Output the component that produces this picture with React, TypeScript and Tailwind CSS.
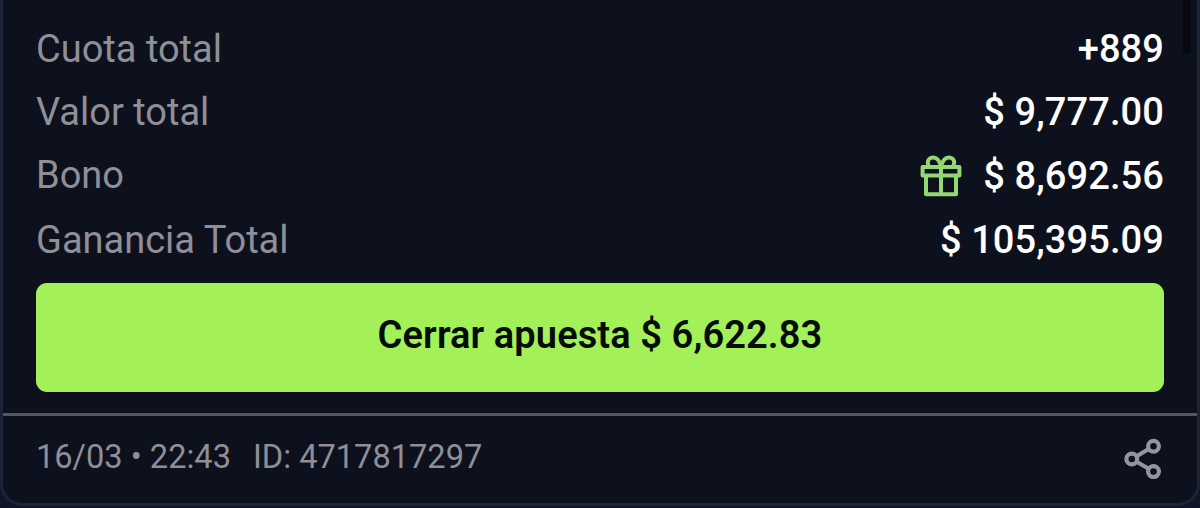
function GiftIcon() {
  return (
    <svg width="42" height="42" viewBox="0 0 42 42" fill="none" stroke="#93d873" strokeWidth="4" strokeLinejoin="round" className="-mt-px shrink-0">
      <rect x="2.6" y="12" width="36.8" height="8.6" />
      <path d="M6 20.8V39.2H36V20.8M21 12V39.2" />
      <path d="M21 11.6C19.6 6 16.8 2.6 13.2 2.6C10 2.6 7.8 4.8 7.8 7.6C7.8 9.4 8.4 10.8 9.4 11.8M21 11.6C22.4 6 25.2 2.6 28.8 2.6C32 2.6 34.2 4.8 34.2 7.6C34.2 9.4 33.6 10.8 32.6 11.8" />
    </svg>
  );
}

function ShareIcon() {
  return (
    <svg width="38" height="42" viewBox="0 0 38 42" fill="none" stroke="#95959d" strokeWidth="4.2" className="shrink-0">
      <circle cx="7.8" cy="21" r="5.4" />
      <circle cx="29.5" cy="8.2" r="5.4" />
      <circle cx="29.5" cy="33.6" r="5.4" />
      <path d="M12.6 18.2L24.7 11M12.6 23.8L24.7 30.8" />
    </svg>
  );
}

export default function App() {
  return (
    <main className="relative h-[508px] w-[1200px] overflow-hidden bg-[#0e1429] font-['Roboto',sans-serif]">
      <section className="flex h-[506px] flex-col rounded-b-[22px] border-x-[3px] border-b-[3px] border-[#1b2337] bg-[#0d111d]">
        <dl className="flex flex-col pl-[33px] pr-[33px] pt-[18px] text-[38px] leading-[63px]">
          <div className="flex h-[63px] justify-between">
            <dt className="text-[#8f8f97]">Cuota total</dt>
            <dd className="font-medium tracking-[0.1px] text-white">+889</dd>
          </div>
          <div className="flex h-[63px] justify-between">
            <dt className="text-[#8f8f97]">Valor total</dt>
            <dd className="font-medium tracking-[0.1px] text-white">$ 9,777.00</dd>
          </div>
          <div className="flex h-[65px] items-end justify-between">
            <dt className="pb-[2px] text-[#8f8f97]">Bono</dt>
            <dd className="flex items-center gap-[21px] pb-px font-medium tracking-[0.1px] text-white">
              <GiftIcon />
              <span>$ 8,692.56</span>
            </dd>
          </div>
          <div className="flex h-[63px] justify-between">
            <dt className="text-[#8f8f97]">Ganancia Total</dt>
            <dd className="font-medium tracking-[0.1px] text-white">$ 105,395.09</dd>
          </div>
        </dl>
        <button className="mx-[32.6px] mt-[10.6px] h-[109px] shrink-0 rounded-[11px] bg-[#a3f059] pb-[3px] text-[38px] font-semibold tracking-[0.1px] text-[#050c03]">
          Cerrar apuesta $ 6,622.83
        </button>
        <footer className="mt-[21.4px] flex flex-1 items-center justify-between border-t-[3px] border-[#55575f] pl-[33px] pr-[35px] text-[32.6px] text-[#8f8f97]">
          <p className="flex gap-[22px] pb-[5px]">
            <span>16/03 • 22:43</span>
            <span>ID: 4717817297</span>
          </p>
          <ShareIcon />
        </footer>
      </section>
      <div className="absolute right-[9px] top-0 h-[54px] w-[8px] rounded-b-full bg-[#070911]" />
    </main>
  );
}
